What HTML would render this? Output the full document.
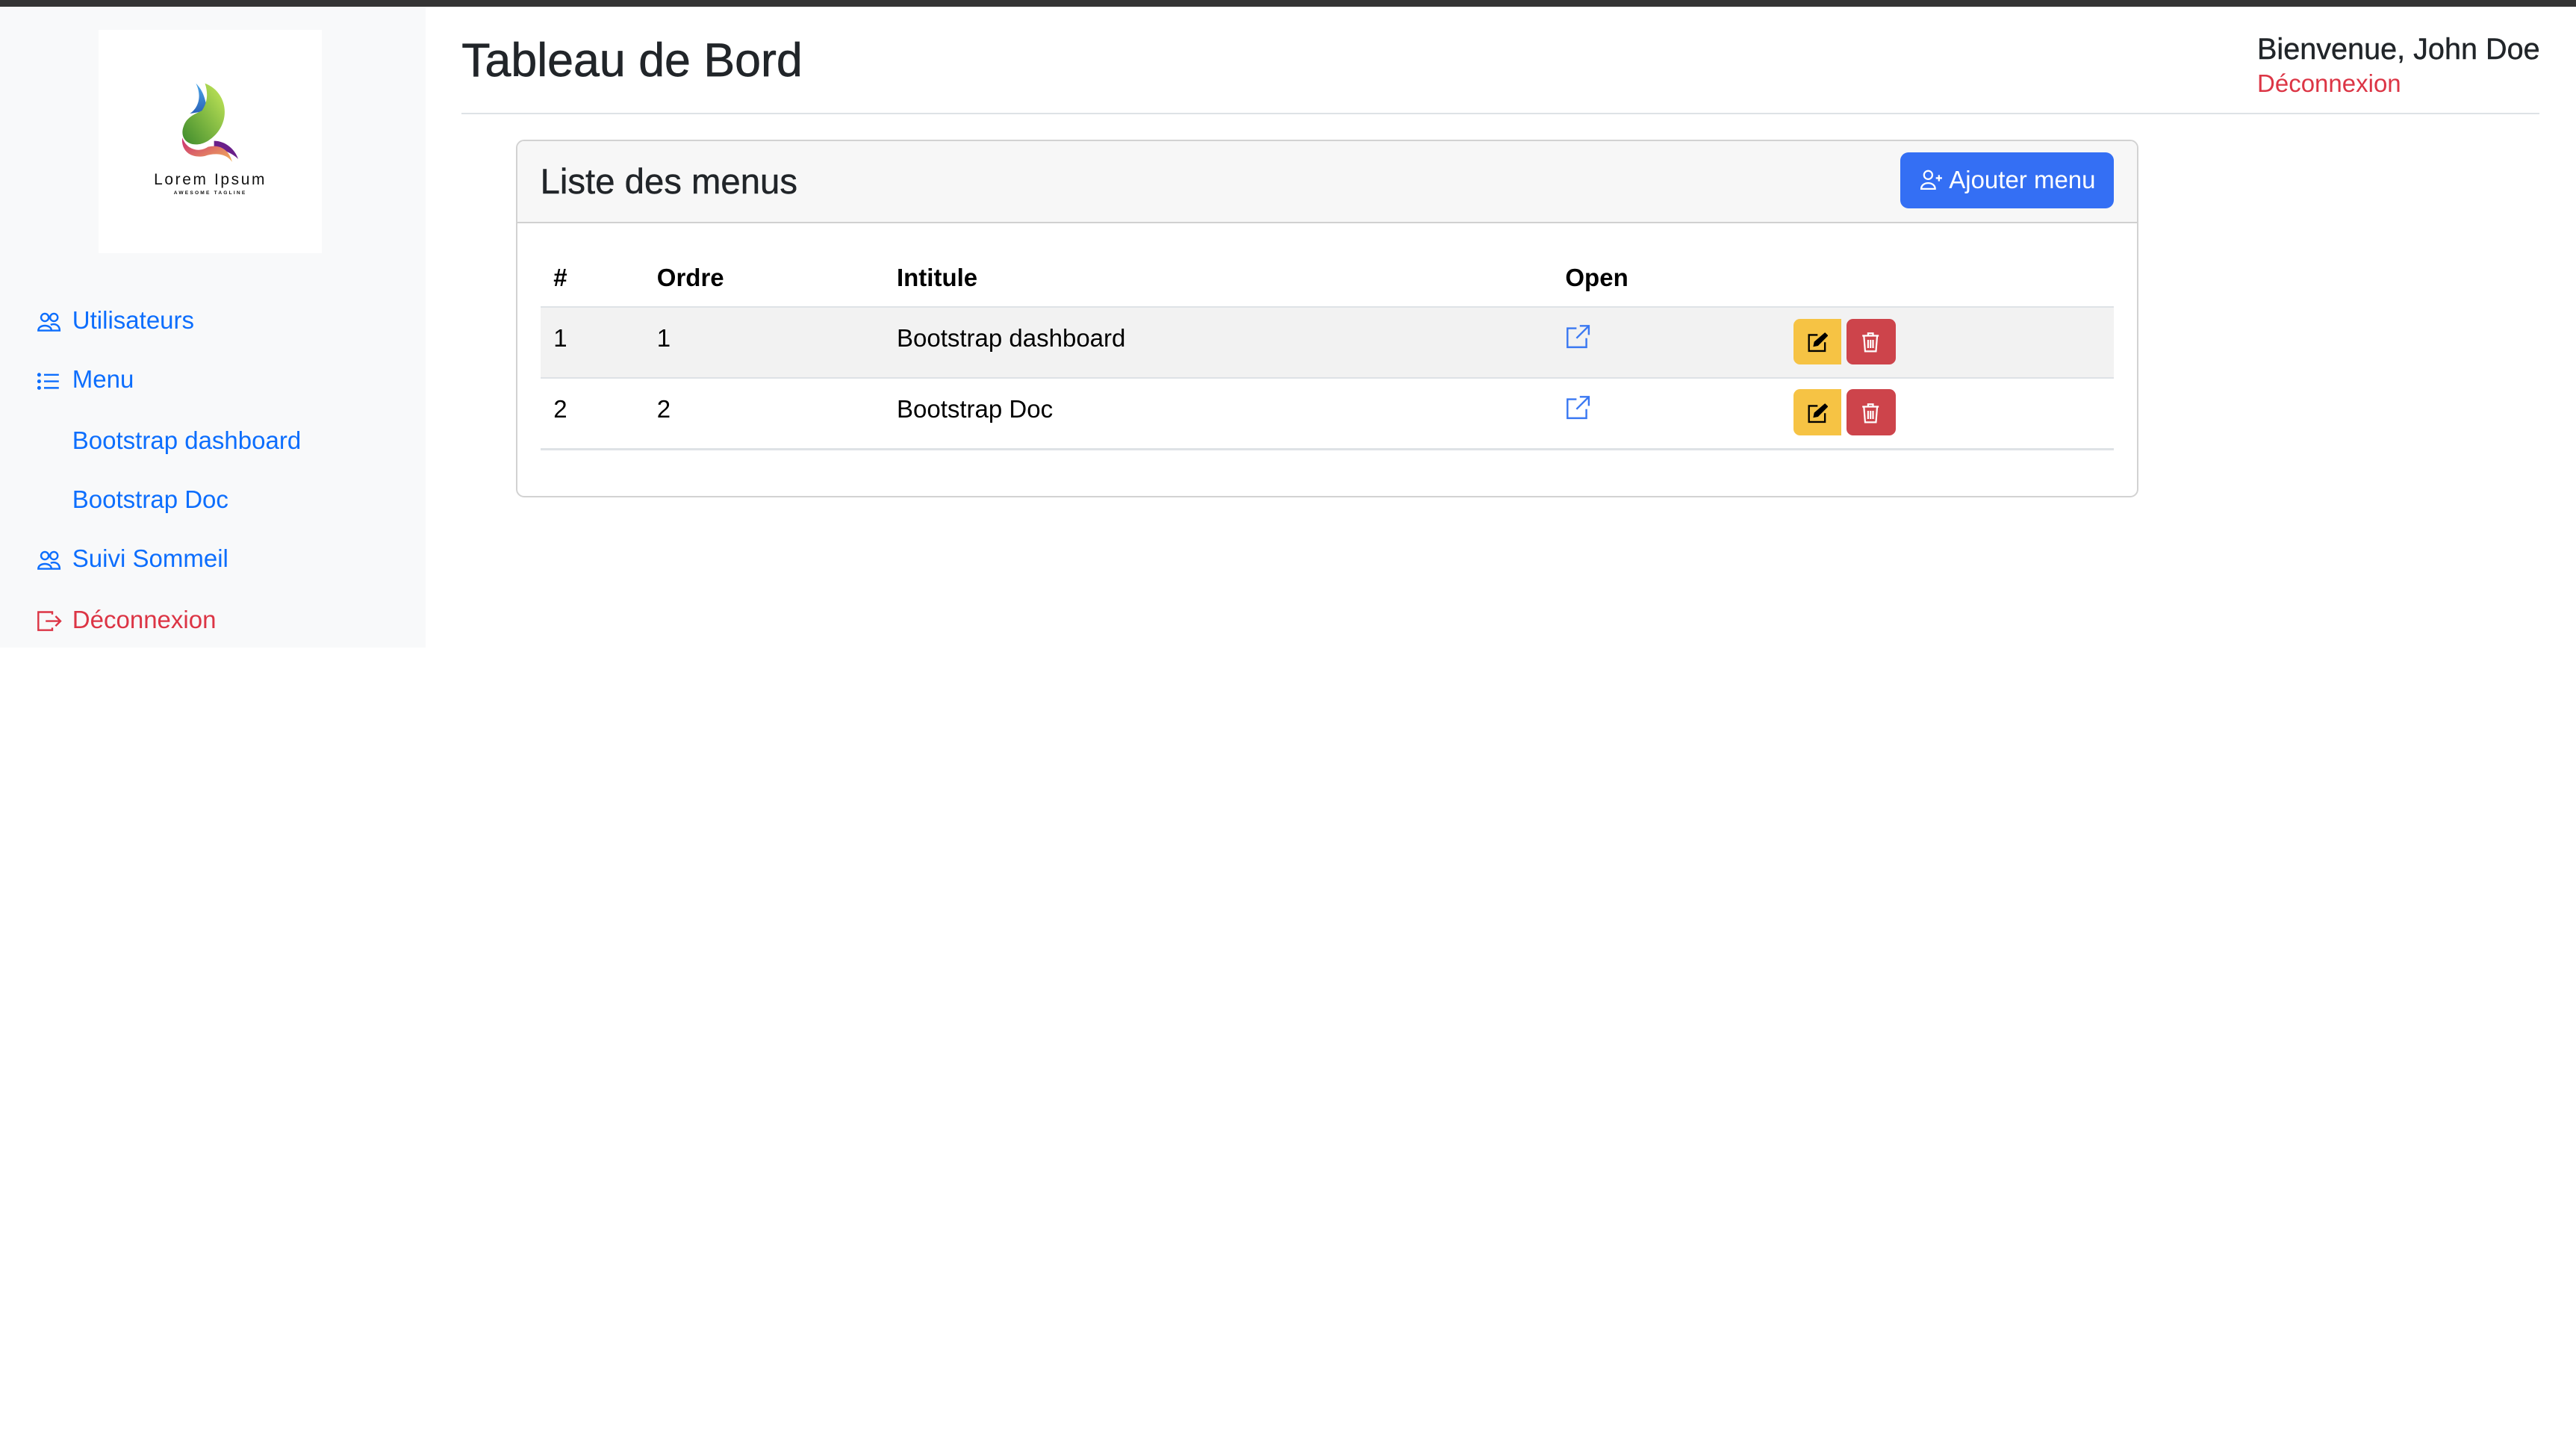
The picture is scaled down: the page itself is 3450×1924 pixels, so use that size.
<!DOCTYPE html>
<html><head><meta charset="utf-8"><style>
html,body{margin:0;padding:0;background:#fff;overflow:hidden}
body{width:3450px;height:1924px;font-family:"Liberation Sans",Arial,sans-serif}
#w{zoom:2.2;width:1568.2px;height:874.6px;position:relative;color:#212529}
.a{position:absolute;white-space:nowrap}
.nav{font-size:15px;color:#0d6efd;line-height:18px}
.nav svg{position:absolute;left:-22px;top:2px}
</style></head><body><div id="w">
<div class="a" style="left:0;top:0;width:1568px;height:4px;background:#343434"></div>
<div class="a" style="left:0;top:4px;width:259px;height:390px;background:#f8f9fa"></div>
<div class="a" style="left:60px;top:18px;width:136px;height:136px;background:#fff">
<svg width="136" height="136" viewBox="0 0 136 136" style="position:absolute;left:0;top:0">
<defs>
<linearGradient id="g1" x1="0" y1="1" x2="1" y2="0"><stop offset="0" stop-color="#3d8a2c"/><stop offset="1" stop-color="#c8ea5a"/></linearGradient>
<linearGradient id="g2" x1="0" y1="0" x2="1" y2="1"><stop offset="0" stop-color="#c92d72"/><stop offset="1" stop-color="#f2b25a"/></linearGradient>
<linearGradient id="g3" x1="0" y1="0" x2="0" y2="1"><stop offset="0" stop-color="#4aa5e8"/><stop offset="1" stop-color="#2a62b8"/></linearGradient>
</defs>
<g transform="translate(68 56.5) scale(0.92) translate(-67.5 -60)">
<path d="M58 34 C62 42 60 50 54 54 L66 52 C64 46 64 40 58 34Z" fill="url(#g3)"/>
<path d="M64 34 C80 40 82 62 66 72 C56 78 46 72 50 62 C52 56 58 54 62 52 C66 46 66 40 64 34Z" fill="url(#g1)"/>
<path d="M70 72 C78 72 84 78 86 84 C82 80 76 78 70 76Z" fill="#6a1f8a"/>
<path d="M49 70 C52 78 60 80 66 76 C74 74 80 78 82 86 C78 80 70 80 64 82 C54 84 48 78 49 70Z" fill="url(#g2)"/>
</g>
<div class="a" style="left:0;width:136px;top:86px;text-align:center;font-size:9.5px;letter-spacing:1.2px;color:#111">Lorem Ipsum</div>
<div class="a" style="left:0;width:136px;top:98px;text-align:center;font-size:3px;letter-spacing:1px;color:#111;font-weight:bold">AWESOME TAGLINE</div>
</div>

<div class="a nav" style="left:44px;top:186px"><svg width="16" height="16" viewBox="0 0 16 16" fill="none" stroke="#0d6efd" stroke-width="1.1"><circle cx="5.5" cy="5" r="2.3"/><circle cx="11" cy="5" r="2.3"/><path d="M1.5 13 C1.5 9 9.5 9 9.5 13Z M9 9.5 C11.5 8.5 14.5 9.5 14.5 13 H10"/></svg>Utilisateurs</div>
<div class="a nav" style="left:44px;top:222px"><svg width="16" height="16" viewBox="0 0 16 16" fill="none" stroke="#0d6efd" stroke-width="1.1"><path d="M5 4h9M5 8h9M5 12h9"/><circle cx="2" cy="4" r=".6" fill="#0d6efd"/><circle cx="2" cy="8" r=".6" fill="#0d6efd"/><circle cx="2" cy="12" r=".6" fill="#0d6efd"/></svg>Menu</div>
<div class="a nav" style="left:44px;top:259px">Bootstrap dashboard</div>
<div class="a nav" style="left:44px;top:295px">Bootstrap Doc</div>
<div class="a nav" style="left:44px;top:331px"><svg width="16" height="16" viewBox="0 0 16 16" fill="none" stroke="#0d6efd" stroke-width="1.1"><circle cx="5.5" cy="5" r="2.3"/><circle cx="11" cy="5" r="2.3"/><path d="M1.5 13 C1.5 9 9.5 9 9.5 13Z M9 9.5 C11.5 8.5 14.5 9.5 14.5 13 H10"/></svg>Suivi Sommeil</div>
<div class="a nav" style="left:44px;top:368px;color:#dc3545"><svg width="16" height="16" viewBox="0 0 16 16" fill="none" stroke="#dc3545" stroke-width="1.1"><path d="M10 4V2.5H1.5v11H10V12M6 8h9M12 5l3 3-3 3"/></svg>Déconnexion</div>

<div class="a" style="left:281px;top:19px;font-size:28.5px;line-height:36px;color:#212529;-webkit-text-stroke:0.3px #212529">Tableau de Bord</div>
<div class="a" style="right:22px;top:19px;font-size:18px;line-height:22px;text-align:left;-webkit-text-stroke:0.2px #212529">Bienvenue, John Doe<div style="font-size:15px;color:#dc3545;line-height:20px;-webkit-text-stroke:0">Déconnexion</div></div>
<div class="a" style="left:281px;top:68.5px;width:1265px;height:1px;background:#dee2e6"></div>

<div class="a" style="left:314px;top:85px;width:986px;height:216px;border:1px solid #d2d2d2;border-radius:5px;overflow:hidden">
<div style="height:49px;background:#f7f7f7;border-bottom:1px solid #d0d0d0;position:relative">
<div class="a" style="left:14px;top:12px;font-size:21.5px;line-height:26px;-webkit-text-stroke:0.2px #212529">Liste des menus</div>
<div class="a" style="left:842px;top:7px;width:130px;height:34px;background:#346ff4;border-radius:5px;color:#fff;font-size:15px;line-height:34px;text-align:center">
<svg width="15" height="15" viewBox="0 0 16 16" fill="none" stroke="#fff" stroke-width="1.1" style="vertical-align:-2px"><circle cx="6" cy="5" r="2.7"/><path d="M1.5 14 C1.5 9 10.5 9 10.5 14Z M13 5v4M11 7h4"/></svg> Ajouter menu</div>
</div>
<div class="a" style="left:14px;top:100.5px;width:958px;height:1px;background:#dee2e6"></div>
<div class="a" style="left:14px;top:101.5px;width:958px;height:42px;background:#f2f2f2"></div>
<div class="a" style="left:14px;top:143.5px;width:958px;height:1px;background:#dee2e6"></div>
<div class="a" style="left:14px;top:187px;width:958px;height:1px;background:#dee2e6"></div>
<div style="font-size:15px;line-height:18px;color:#000">
<b class="a" style="left:22px;top:74px">#</b><b class="a" style="left:85px;top:74px">Ordre</b><b class="a" style="left:231px;top:74px">Intitule</b><b class="a" style="left:638px;top:74px">Open</b>
<span class="a" style="left:22px;top:111px">1</span><span class="a" style="left:85px;top:111px">1</span><span class="a" style="left:231px;top:111px">Bootstrap dashboard</span>
<span class="a" style="left:22px;top:154px">2</span><span class="a" style="left:85px;top:154px">2</span><span class="a" style="left:231px;top:154px">Bootstrap Doc</span>
</div>
<svg class="a" style="left:638px;top:111px" width="16" height="16" viewBox="0 0 16 16" fill="none" stroke="#3a78f2" stroke-width="1.1"><path d="M7 3H1.5v11.5H13V9M9 1.5h5.5V7M14.5 1.5 7 9"/></svg>
<svg class="a" style="left:638px;top:154px" width="16" height="16" viewBox="0 0 16 16" fill="none" stroke="#3a78f2" stroke-width="1.1"><path d="M7 3H1.5v11.5H13V9M9 1.5h5.5V7M14.5 1.5 7 9"/></svg>
<div class="a" style="left:777px;top:108px;width:29px;height:28px;background:#f6c344;border-radius:4px 0 0 4px"><svg class="a" style="left:8px;top:8px" width="13" height="13" viewBox="0 0 16 16" fill="none" stroke="#000" stroke-width="1.3"><path d="M8 2.5H1.5v12h12V8"/><path d="M13.5 1.5 15 3 8 10 5.5 10.5 6 8Z" fill="#000"/></svg></div>
<div class="a" style="left:809px;top:108px;width:30px;height:28px;background:#cd444b;border-radius:4px"><svg class="a" style="left:9px;top:8px" width="12" height="13" viewBox="0 0 12 13" fill="none" stroke="#fff" stroke-width="1"><path d="M1 2.5h10M4.5 2.5V1h3v1.5M2 3l.7 9h6.6L10 3M4.5 5v5M6 5v5M7.5 5v5"/></svg></div>
<div class="a" style="left:777px;top:151px;width:29px;height:28px;background:#f6c344;border-radius:4px 0 0 4px"><svg class="a" style="left:8px;top:8px" width="13" height="13" viewBox="0 0 16 16" fill="none" stroke="#000" stroke-width="1.3"><path d="M8 2.5H1.5v12h12V8"/><path d="M13.5 1.5 15 3 8 10 5.5 10.5 6 8Z" fill="#000"/></svg></div>
<div class="a" style="left:809px;top:151px;width:30px;height:28px;background:#cd444b;border-radius:4px"><svg class="a" style="left:9px;top:8px" width="12" height="13" viewBox="0 0 12 13" fill="none" stroke="#fff" stroke-width="1"><path d="M1 2.5h10M4.5 2.5V1h3v1.5M2 3l.7 9h6.6L10 3M4.5 5v5M6 5v5M7.5 5v5"/></svg></div>
</div>
</div></body></html>
